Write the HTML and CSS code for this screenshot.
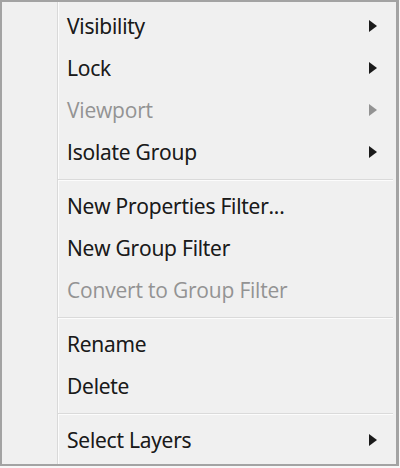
FILE: index.html
```html
<!DOCTYPE html>
<html lang="en">

<head>
  <meta charset="UTF-8">
  <meta name="viewport" content="width=device-width, initial-scale=1.0">
  <title>Layer context menu</title>
  <link rel="stylesheet" href="styles.css">
</head>

<body>
  <ul class="menu">
    <li class="item">Visibility<svg class="arrow" viewBox="0 0 8 12"><polygon points="0,0 8,6 0,12" /></svg></li>
    <li class="item">Lock<svg class="arrow" viewBox="0 0 8 12"><polygon points="0,0 8,6 0,12" /></svg></li>
    <li class="item disabled">Viewport<svg class="arrow" viewBox="0 0 8 12"><polygon points="0,0 8,6 0,12" /></svg></li>
    <li class="item">Isolate Group<svg class="arrow" viewBox="0 0 8 12"><polygon points="0,0 8,6 0,12" /></svg></li>
    <li class="sep"></li>
    <li class="item">New Properties Filter...</li>
    <li class="item">New Group Filter</li>
    <li class="item disabled">Convert to Group Filter</li>
    <li class="sep"></li>
    <li class="item">Rename</li>
    <li class="item">Delete</li>
    <li class="sep"></li>
    <li class="item">Select Layers<svg class="arrow" viewBox="0 0 8 12"><polygon points="0,0 8,6 0,12" /></svg></li>
  </ul>
</body>

</html>
```

FILE: styles.css
```css
* {
  margin: 0;
  padding: 0;
  box-sizing: border-box;
}

body {
  background-color: #f7f7f7;
}

li {
  list-style-type: none;
}

.menu {
  width: 399px;
  height: 466px;
  padding: 3px 0 2px 0;
  border: 2px solid #a3a3a3;
  border-right-width: 3px;
  background-color: #f0f0f0;
  /* gutter line next to the icon column */
  background-image: linear-gradient(to right, transparent 55px, #d9d9d9 55px, #d9d9d9 56px, #fcfcfc 56px, #fcfcfc 57px, transparent 57px);
  font-family: "Open Sans", "Noto Sans", sans-serif;
  font-size: 21px;
  letter-spacing: -0.2px;
  color: #1a1a1a;
  text-shadow: 0 0 0.5px rgba(0, 0, 0, 0.4);
}

.menu .item {
  display: flex;
  align-items: center;
  height: 42px;
  padding: 0 19px 0 65px;
}

.menu .item.disabled {
  color: #939393;
  text-shadow: none;
}

.menu .arrow {
  width: 8px;
  height: 12px;
  margin-left: auto;
  fill: #1a1a1a;
}

.menu .disabled .arrow {
  fill: #939393;
}

.menu .sep {
  height: 2px;
  margin: 6px 3px 4px 56px;
  border-top: 1px solid #dadada;
  border-bottom: 1px solid #fcfcfc;
}
```
